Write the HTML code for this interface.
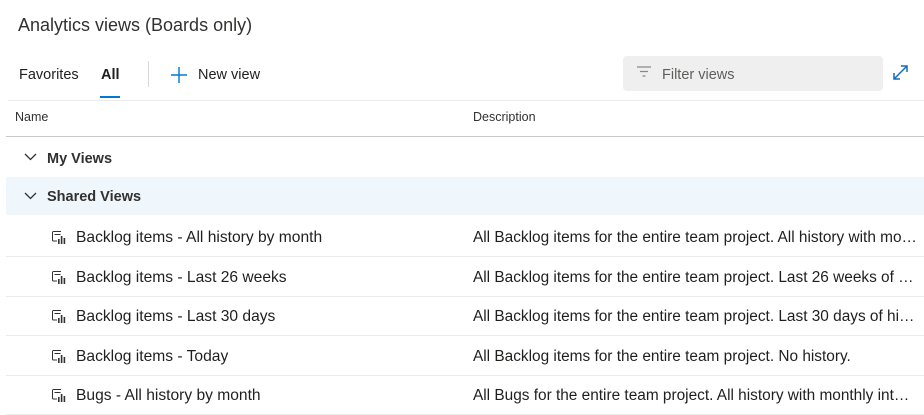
<!DOCTYPE html>
<html><head><style>
body{margin:0;width:924px;height:404px;overflow:hidden;background:#fff;font-family:"Liberation Sans",sans-serif;color:#201f1e;position:relative}
.a{position:absolute;white-space:nowrap}
.row{position:absolute;left:6px;right:0;height:39px;border-bottom:1px solid #eaeaea}
.row .n{position:absolute;left:70px;top:12px;font-size:15.6px;white-space:nowrap}
.row .d{display:block;position:absolute;left:467px;top:12px;font-size:15.4px;width:444px;overflow:hidden;white-space:nowrap;text-overflow:ellipsis}
.ic{position:absolute;left:46px;top:14px}
</style></head><body>
<div class="a" style="left:18px;top:15px;font-size:18px;color:#323130">Analytics views (Boards only)</div>
<div class="a" style="left:19px;top:67px;font-size:14.5px">Favorites</div>
<div class="a" style="left:101px;top:67px;font-size:14.5px;font-weight:bold">All</div>
<div class="a" style="left:100px;top:96px;width:20px;height:2px;background:#0078d4"></div>
<div class="a" style="left:148px;top:61px;width:1px;height:26px;background:#d8d8d8"></div>
<svg class="a" style="left:170px;top:66px" width="18" height="18"><path d="M9 1v16M1 9h16" stroke="#0078d4" stroke-width="1.4"/></svg>
<div class="a" style="left:198px;top:67px;font-size:14.5px">New view</div>
<div class="a" style="left:623px;top:56px;width:260px;height:35px;background:#efefef;border-radius:4px"></div>
<svg class="a" style="left:637px;top:66px" width="14" height="12"><path d="M0 1h14M3 5.5h8M5.5 10h3" stroke="#8a8886" stroke-width="1.3"/></svg>
<div class="a" style="left:662px;top:67px;font-size:14.5px;color:#605e5c">Filter views</div>
<svg class="a" style="left:892px;top:64px" width="17" height="17"><path d="M2 15L15 2M9 2h6v6M2 9v6h6" stroke="#106ebe" stroke-width="1.5" fill="none"/></svg>
<div class="a" style="left:8px;top:100px;right:0;height:1px;background:#ebebeb"></div>
<div class="a" style="left:15px;top:110px;font-size:12.5px;color:#323130">Name</div>
<div class="a" style="left:473px;top:110px;font-size:12.5px;color:#323130">Description</div>
<div class="a" style="left:6px;top:136px;right:0;height:1px;background:#c8c8c8"></div>
<svg class="a" style="left:24px;top:153px" width="13" height="8"><path d="M1 1l5.5 5.5L12 1" stroke="#323130" stroke-width="1.3" fill="none"/></svg>
<div class="a" style="left:47px;top:151px;font-size:14.5px;font-weight:bold;color:#323130">My Views</div>
<div class="a" style="left:6px;top:177px;right:0;height:38px;background:#eff6fc"></div>
<svg class="a" style="left:24px;top:192px" width="13" height="8"><path d="M1 1l5.5 5.5L12 1" stroke="#323130" stroke-width="1.3" fill="none"/></svg>
<div class="a" style="left:47px;top:189px;font-size:14.5px;font-weight:bold;color:#323130">Shared Views</div>

<div class="row" style="top:217px"><svg class="ic" width="14" height="13"><path d="M9 .5H1.5a1 1 0 0 0-1 1V9a1 1 0 0 0 1 1H5" stroke="#323130" fill="none"/><path d="M2.5 3.5h6" stroke="#323130"/><rect x="6" y="8" width="1.6" height="5" fill="#323130"/><rect x="8.8" y="5" width="1.6" height="8" fill="#323130"/><rect x="11.6" y="7" width="1.6" height="6" fill="#323130"/></svg><span class="n">Backlog items - All history by month</span><span class="d">All Backlog items for the entire team project. All history with monthly intervals</span></div>
<div class="row" style="top:257px"><svg class="ic" width="14" height="13"><path d="M9 .5H1.5a1 1 0 0 0-1 1V9a1 1 0 0 0 1 1H5" stroke="#323130" fill="none"/><path d="M2.5 3.5h6" stroke="#323130"/><rect x="6" y="8" width="1.6" height="5" fill="#323130"/><rect x="8.8" y="5" width="1.6" height="8" fill="#323130"/><rect x="11.6" y="7" width="1.6" height="6" fill="#323130"/></svg><span class="n">Backlog items - Last 26 weeks</span><span class="d">All Backlog items for the entire team project. Last 26 weeks of history</span></div>
<div class="row" style="top:296px"><svg class="ic" width="14" height="13"><path d="M9 .5H1.5a1 1 0 0 0-1 1V9a1 1 0 0 0 1 1H5" stroke="#323130" fill="none"/><path d="M2.5 3.5h6" stroke="#323130"/><rect x="6" y="8" width="1.6" height="5" fill="#323130"/><rect x="8.8" y="5" width="1.6" height="8" fill="#323130"/><rect x="11.6" y="7" width="1.6" height="6" fill="#323130"/></svg><span class="n">Backlog items - Last 30 days</span><span class="d">All Backlog items for the entire team project. Last 30 days of history</span></div>
<div class="row" style="top:336px"><svg class="ic" width="14" height="13"><path d="M9 .5H1.5a1 1 0 0 0-1 1V9a1 1 0 0 0 1 1H5" stroke="#323130" fill="none"/><path d="M2.5 3.5h6" stroke="#323130"/><rect x="6" y="8" width="1.6" height="5" fill="#323130"/><rect x="8.8" y="5" width="1.6" height="8" fill="#323130"/><rect x="11.6" y="7" width="1.6" height="6" fill="#323130"/></svg><span class="n">Backlog items - Today</span><span class="d">All Backlog items for the entire team project. No history.</span></div>
<div class="row" style="top:375px"><svg class="ic" width="14" height="13"><path d="M9 .5H1.5a1 1 0 0 0-1 1V9a1 1 0 0 0 1 1H5" stroke="#323130" fill="none"/><path d="M2.5 3.5h6" stroke="#323130"/><rect x="6" y="8" width="1.6" height="5" fill="#323130"/><rect x="8.8" y="5" width="1.6" height="8" fill="#323130"/><rect x="11.6" y="7" width="1.6" height="6" fill="#323130"/></svg><span class="n">Bugs - All history by month</span><span class="d">All Bugs for the entire team project. All history with monthly intervals</span></div>
</body></html>
